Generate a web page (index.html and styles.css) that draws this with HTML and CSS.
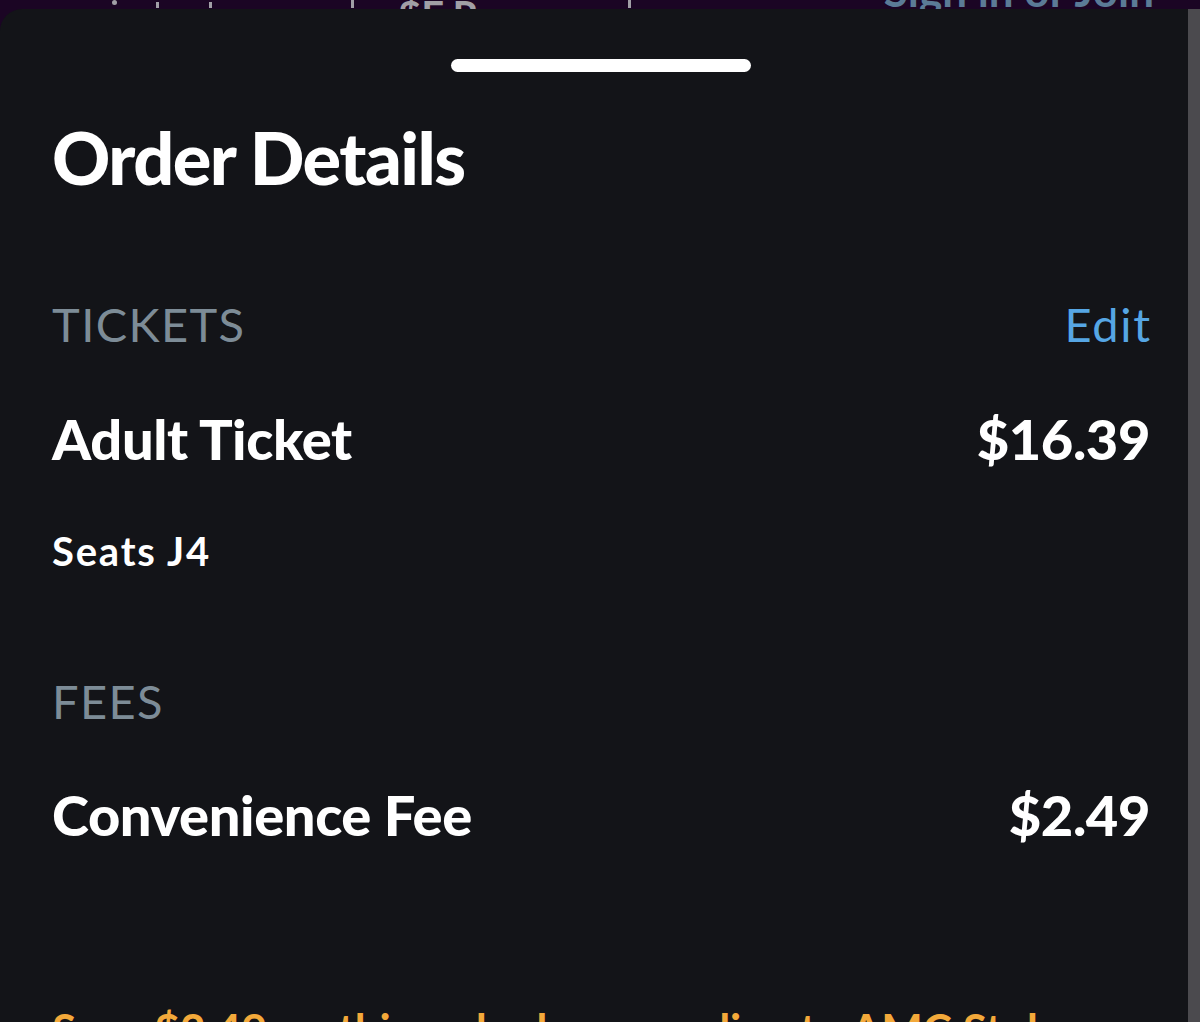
FILE: index.html
```html
<!DOCTYPE html>
<html lang="en">
<head>
<meta charset="utf-8">
<title>Order Details</title>
<link rel="stylesheet" href="styles.css">
</head>
<body>
<div class="backdrop">
  <div class="behind">
    <div class="behind-left">
      <span class="dot"></span>
      <span class="tick t1"></span>
      <span class="tick t2"></span>
      <span class="tick t3"></span>
      <span class="price-bit">$F R</span>
      <span class="tick t4"></span>
    </div>
    <span class="signin">Sign in or Join</span>
  </div>
  <div class="stage">
    <div class="sheet">
      <div class="handle"></div>
      <h1 class="title">Order Details</h1>

      <div class="section-head tickets-head">
        <span class="label">TICKETS</span>
        <span class="edit">Edit</span>
      </div>
      <div class="line-item adult">
        <span>Adult Ticket</span>
        <span>$16.39</span>
      </div>
      <div class="seats">Seats J4</div>

      <div class="section-head fees-head">
        <span class="label">FEES</span>
      </div>
      <div class="line-item fee">
        <span>Convenience Fee</span>
        <span>$2.49</span>
      </div>

      <div class="promo">Save $2.49 on this order by upgrading to AMC Stubs</div>
    </div>
    <div class="scrollbar"></div>
  </div>
</div>
</body>
</html>
```

FILE: styles.css
```css
html, body {
  margin: 0;
  padding: 0;
  background: #1b0524;
}

body {
  font-family: "Lato", "Liberation Sans", sans-serif;
  width: 1200px;
  height: 1022px;
  overflow: hidden;
}

.backdrop {
  display: flex;
  flex-direction: column;
  height: 1022px;
}

.behind {
  height: 9px;
  overflow: hidden;
  display: flex;
  align-items: flex-end;
  justify-content: space-between;
  padding: 0 46px 0 0;
  flex-shrink: 0;
}

.behind-left {
  display: flex;
  align-items: flex-end;
  height: 9px;
  padding-left: 112px;
}

.dot {
  width: 5px;
  height: 5px;
  border-radius: 50%;
  background: #a19fa6;
  margin-bottom: 4px;
}

.tick {
  width: 3px;
  height: 6px;
  background: #a19fa6;
  margin-bottom: 1px;
}

.t1 { margin-left: 39px; }
.t2 { margin-left: 50px; }
.t3 { margin-left: 139px; height: 9px; }
.t4 { margin-left: 150px; height: 9px; }

.price-bit {
  margin-left: 44px;
  font-size: 40px;
  line-height: 40px;
  font-weight: 700;
  color: #a19fa6;
  margin-bottom: -26px;
}

.signin {
  font-size: 44px;
  line-height: 44px;
  font-weight: 700;
  color: #5b7b96;
  margin-bottom: -3px;
}

.stage {
  flex: 1;
  display: flex;
}

.sheet {
  width: 1188px;
  background: #131418;
  border-top-left-radius: 22px;
  padding: 50px 38px 0 52px;
  box-sizing: border-box;
  color: #ffffff;
  overflow: hidden;
}

.scrollbar {
  width: 12px;
  background: #4b4a4e;
}

.handle {
  width: 300px;
  height: 13px;
  border-radius: 7px;
  background: #ffffff;
  margin: 0 auto;
}

.title {
  margin: 49px 0 0;
  font-size: 72px;
  line-height: 72px;
  font-weight: 900;
  letter-spacing: -1.5px;
}

.section-head {
  display: flex;
  justify-content: space-between;
  align-items: baseline;
  font-size: 47px;
  line-height: 47px;
}

.tickets-head { margin-top: 108px; }
.fees-head { margin-top: 107px; }

.label {
  color: #7d8c97;
  font-weight: 400;
  letter-spacing: 1.4px;
}

.edit {
  color: #56a6e4;
  font-weight: 400;
  letter-spacing: 1.6px;
  margin-right: -1.6px;
}

.line-item {
  display: flex;
  justify-content: space-between;
  font-size: 56px;
  line-height: 56px;
  font-weight: 900;
  letter-spacing: -0.4px;
}

.adult { margin-top: 63px; }
.fee { margin-top: 62px; }

.seats {
  margin-top: 64px;
  font-size: 40px;
  line-height: 40px;
  font-weight: 700;
  letter-spacing: 1.8px;
}

.promo {
  margin-top: 164px;
  font-size: 44px;
  line-height: 44px;
  font-weight: 700;
  color: #f3a93a;
  white-space: nowrap;
}
```
